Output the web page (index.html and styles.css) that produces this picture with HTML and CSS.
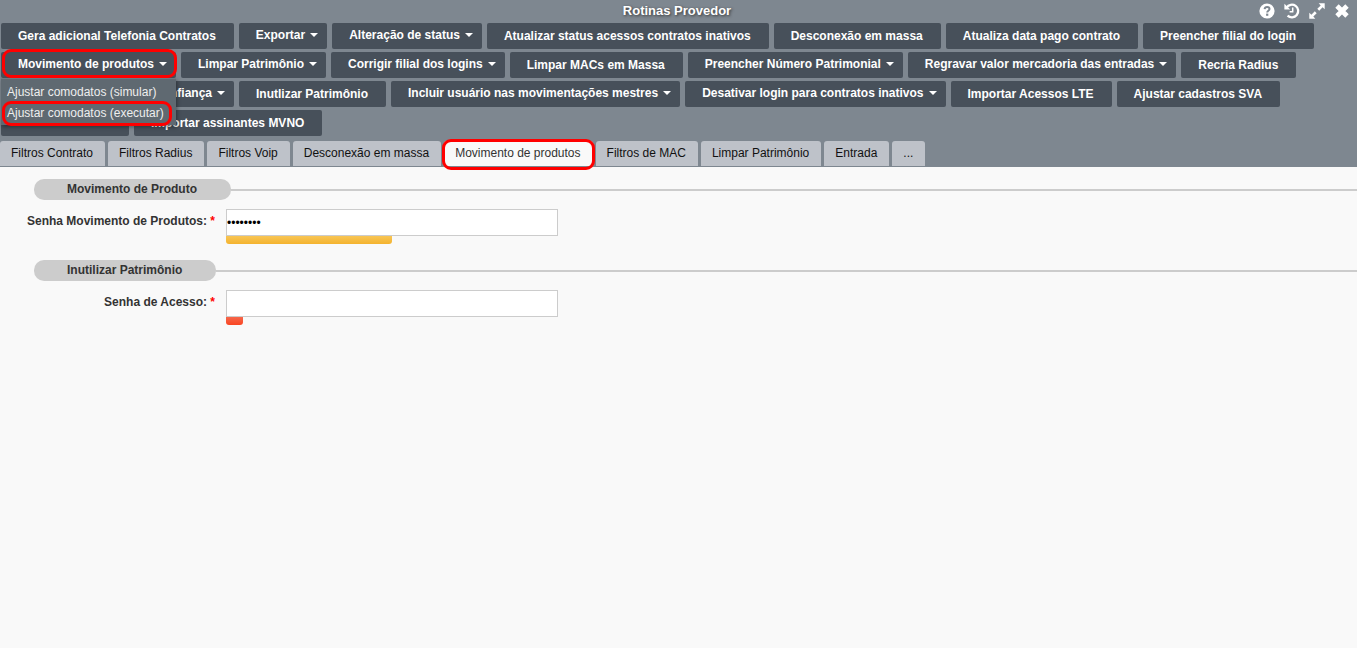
FILE: index.html
```html
<!DOCTYPE html>
<html lang="pt-BR">
<head>
<meta charset="utf-8">
<title>Rotinas Provedor</title>
<link rel="stylesheet" href="styles.css">
</head>
<body>
<header class="header">
  <div class="titlebar">
    <h1 class="title">Rotinas Provedor</h1>
    <div class="window-actions">
      <button class="icon-button" type="button"><svg width="16" height="16" viewBox="0 0 16 16"><circle cx="8" cy="8" r="7.6" fill="#fff"/><path d="M5.6 6.2C5.8 4.6 6.8 4 8.1 4c1.5 0 2.4.8 2.4 2 0 1.800-2.300 1.700-2.300 3.400" fill="none" stroke="#7e8790" stroke-width="2"/><rect x="7.100" y="10.600" width="2.200" height="2.200" fill="#7e8790"/></svg></button>
      <button class="icon-button" type="button"><svg width="16" height="16" viewBox="0 0 16 16"><path d="M2.600 4.600A6.300 6.300 0 1 1 3.600 12.600" fill="none" stroke="#fff" stroke-width="2.300"/><path d="M.4.8v5.800h5.800z" fill="#fff"/><path d="M8.700 4.600v4.200H5.600" fill="none" stroke="#fff" stroke-width="1.500"/></svg></button>
      <button class="icon-button" type="button"><svg width="16" height="16" viewBox="0 0 16 16"><path d="M15.700.3v6L13.600 4.300 10.200 7.700 8.300 5.800 11.700 2.400 9.700.3zM.3 15.700v-6l2.100 2 3.400-3.400 1.900 1.900-3.400 3.400 2 2.100z" fill="#fff"/></svg></button>
      <button class="icon-button" type="button"><svg width="16" height="16" viewBox="0 0 16 16"><path d="M3 3l10 10M13 3L3 13" stroke="#fff" stroke-width="4.800"/></svg></button>
    </div>
  </div>

  <nav class="toolbar">
    <button class="tool" type="button">Gera adicional Telefonia Contratos</button>
    <button class="tool tool-menu" type="button">Exportar</button>
    <button class="tool tool-menu" type="button">Alteração de status</button>
    <button class="tool" type="button">Atualizar status acessos contratos inativos</button>
    <button class="tool" type="button">Desconexão em massa</button>
    <button class="tool" type="button">Atualiza data pago contrato</button>
    <button class="tool" type="button">Preencher filial do login</button>
    <div class="dropdown">
      <button class="tool tool-menu marked" type="button" aria-expanded="true">Movimento de produtos</button>
      <div class="menu">
        <button class="menu-item" type="button">Ajustar comodatos (simular)</button>
        <button class="menu-item marked" type="button">Ajustar comodatos (executar)</button>
      </div>
    </div>
    <button class="tool tool-menu" type="button">Limpar Patrimônio</button>
    <button class="tool tool-menu" type="button">Corrigir filial dos logins</button>
    <button class="tool" type="button">Limpar MACs em Massa</button>
    <button class="tool tool-menu" type="button">Preencher Número Patrimonial</button>
    <button class="tool tool-menu" type="button">Regravar valor mercadoria das entradas</button>
    <button class="tool" type="button">Recria Radius</button>
    <button class="tool tool-menu tool-wide" type="button">confiança</button>
    <button class="tool" type="button">Inutlizar Patrimônio</button>
    <button class="tool tool-menu" type="button">Incluir usuário nas movimentações mestres</button>
    <button class="tool tool-menu" type="button">Desativar login para contratos inativos</button>
    <button class="tool" type="button">Importar Acessos LTE</button>
    <button class="tool" type="button">Ajustar cadastros SVA</button>
    <button class="tool tool-blank" type="button"></button>
    <button class="tool" type="button">Importar assinantes MVNO</button>
  </nav>

  <div class="tabs" role="tablist">
    <button class="tab" type="button" role="tab">Filtros Contrato</button>
    <button class="tab" type="button" role="tab">Filtros Radius</button>
    <button class="tab" type="button" role="tab">Filtros Voip</button>
    <button class="tab" type="button" role="tab">Desconexão em massa</button>
    <button class="tab tab-active marked" type="button" role="tab" aria-selected="true">Movimento de produtos</button>
    <button class="tab" type="button" role="tab">Filtros de MAC</button>
    <button class="tab" type="button" role="tab">Limpar Patrimônio</button>
    <button class="tab" type="button" role="tab">Entrada</button>
    <button class="tab" type="button" role="tab">...</button>
  </div>
</header>

<main class="content">
  <section class="group">
    <h2 class="legend"><span class="legend-text">Movimento de Produto</span></h2>
    <div class="field">
      <label class="label" for="senha-movimento">Senha Movimento de Produtos: <span class="required">*</span></label>
      <div class="control">
        <input class="input" id="senha-movimento" type="password" value="produtos">
        <div class="strength strength-medium" style="width: 50%"></div>
      </div>
    </div>
  </section>
  <section class="group">
    <h2 class="legend"><span class="legend-text">Inutilizar Patrimônio</span></h2>
    <div class="field">
      <label class="label" for="senha-acesso">Senha de Acesso: <span class="required">*</span></label>
      <div class="control">
        <input class="input" id="senha-acesso" type="password">
        <div class="strength strength-weak" style="width: 5%"></div>
      </div>
    </div>
  </section>
</main>
</body>
</html>
```
FILE: styles.css
```css
* {
  box-sizing: border-box;
}

body {
  margin: 0;
  background: #f9f9f9;
  color: #333;
  font: 12px/16px "Liberation Sans", Arial, sans-serif;
}

button,
input {
  margin: 0;
  border: 0;
  font: inherit;
}

.header {
  background: #7e8790;
}

.titlebar {
  display: grid;
  grid-template-columns: 1fr auto 1fr;
  align-items: center;
  height: 23px;
  padding: 0 7px 1px 4px;
}

.title {
  grid-column: 2;
  margin: 0;
  color: #fff;
  font-size: 13px;
  text-shadow: 1px 1px 3px #333;
}

.window-actions {
  display: flex;
  justify-content: flex-end;
  gap: 9px;
}

.icon-button {
  display: flex;
  padding: 0;
  background: none;
}

.toolbar {
  display: flex;
  flex-wrap: wrap;
  gap: 3px 5px;
  padding: 0 1px;
}

.tool {
  display: flex;
  align-items: center;
  height: 26px;
  padding: 0 18px 0 17px;
  border-radius: 2px;
  background: #47505a;
  color: #fff;
  font-weight: bold;
  white-space: nowrap;
}

.tool-menu {
  gap: 5px;
  padding: 0 9px 2px 17px;
}

.tool-menu::after {
  content: "";
  border: 4px solid transparent;
  border-top-color: #fff;
  border-bottom: 0;
}

.tool-wide {
  justify-content: flex-end;
  min-width: 233px;
}

.tool-blank {
  min-width: 128px;
}

.dropdown {
  position: relative;
}

.menu {
  position: absolute;
  z-index: 2;
  top: 100%;
  left: 0;
  width: 100%;
  padding: 2px 0;
  border-top: 1px solid #6f7982;
  background: #5f6971;
  box-shadow: 1px 2px 4px rgba(0, 0, 0, 0.4);
}

.menu-item {
  display: block;
  height: 21px;
  padding: 0 6px;
  background: none;
  color: #eee;
  white-space: nowrap;
}

/* Red outline drawing attention to a control */
.marked {
  position: relative;
}

.marked::before {
  content: "";
  position: absolute;
  z-index: 3;
  inset: -3px -1px 0 1px;
  border: 3px solid #f00;
  border-radius: 9px;
  pointer-events: none;
}

.menu-item.marked::before {
  inset: -1px -2px -3px 1px;
}

.tab.marked::before {
  inset: -2px -2px -4px;
}

.tabs {
  display: flex;
  gap: 3px;
  margin-top: 5px;
  padding-bottom: 1px;
}

.tab {
  height: 25px;
  padding: 0 12px 1px 11px;
  border-radius: 3px 3px 0 0;
  background: #bec2c9;
  color: #111;
}

.tab-active {
  background: #f9f9f9;
  color: #333;
}

.content {
  padding-top: 12px;
}

.group {
  margin-bottom: 16px;
}

.legend {
  display: flex;
  align-items: center;
  margin: 0 0 9px 34px;
  font-size: 12px;
}

.legend::after {
  content: "";
  flex: 1;
  height: 2px;
  background: #ccc;
}

.legend-text {
  padding: 2px 34px 3px 33px;
  border-radius: 10px;
  background: #ccc;
}

.field {
  display: flex;
  gap: 11px;
}

.label {
  width: 215px;
  padding-top: 4px;
  font-weight: bold;
  text-align: right;
}

.required {
  color: #f00;
}

.control {
  width: 332px;
}

.input {
  display: block;
  width: 100%;
  height: 27px;
  padding: 0;
  border: 1px solid #ccc;
  background: #fff;
  color: #000;
}

.strength {
  height: 8px;
  border-radius: 0 0 3px 3px;
}

.strength-medium {
  background: linear-gradient(#f8c555, #f4b32f);
}

.strength-weak {
  background: linear-gradient(#f5674b, #fa4522);
}
```
